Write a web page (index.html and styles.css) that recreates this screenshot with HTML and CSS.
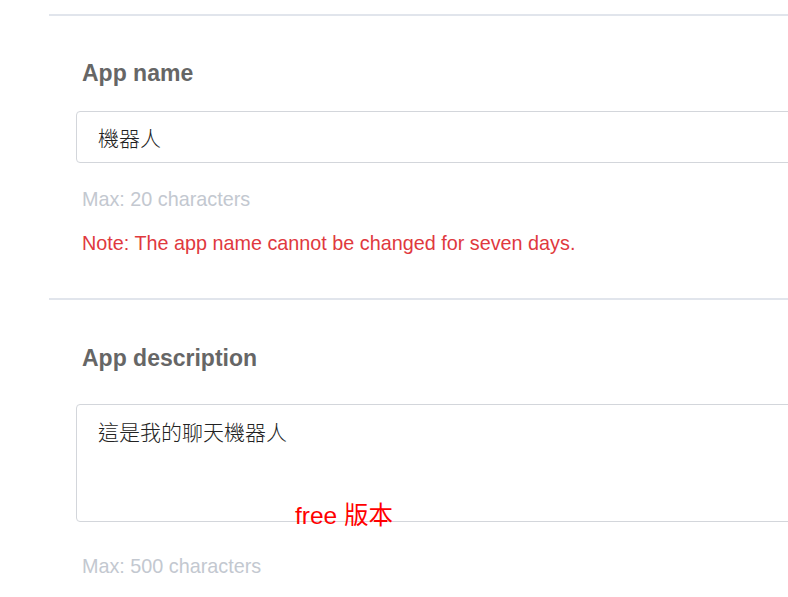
FILE: index.html
```html
<!DOCTYPE html>
<html lang="zh-Hant">
<head>
<meta charset="utf-8">
<title>App settings</title>
<link rel="stylesheet" href="styles.css">
</head>
<body>
<div class="page">
  <section class="field field-name">
    <h2 class="label">App name</h2>
    <div class="input">機器人</div>
    <p class="hint">Max: 20 characters</p>
    <p class="note">Note: The app name cannot be changed for seven days.</p>
  </section>
  <section class="field field-desc">
    <h2 class="label">App description</h2>
    <div class="textarea">這是我的聊天機器人</div>
    <p class="hint">Max: 500 characters</p>
    <span class="badge">free 版本</span>
  </section>
</div>
</body>
</html>
```
FILE: styles.css
```css
html, body {
  margin: 0;
  padding: 0;
  background: #ffffff;
  overflow: hidden;
}
body {
  font-family: "Liberation Sans", Arial, "Noto Sans CJK TC", sans-serif;
}
.page {
  padding-top: 14px;
  margin-left: 49px;
  width: 900px;
  position: relative;
}
.field {
  border-top: 2px solid #e1e5ec;
  padding: 0 0 0 27px;
  display: flex;
  flex-direction: column;
  align-items: stretch;
}
.label {
  margin: 0;
  padding-left: 6px;
  font-size: 23px;
  line-height: 30px;
  font-weight: bold;
  color: #666666;
}
.field-name .label { margin-top: 42px; }
.field-desc .label { margin-top: 43px; }
.input, .textarea {
  border: 1px solid #d3d6db;
  border-radius: 4px;
  box-sizing: border-box;
  padding: 0 21px;
  font-family: "Noto Sans CJK TC", "Liberation Sans", sans-serif;
  font-weight: 300;
  font-size: 21px;
  color: #222222;
}
.input {
  margin-top: 23px;
  height: 52px;
  line-height: 50px;
}
.textarea {
  margin-top: 31px;
  height: 118px;
  padding-top: 12px;
  line-height: 28px;
}
.hint {
  margin: 0;
  padding-left: 6px;
  font-size: 19.8px;
  line-height: 24px;
  color: #c3c8d0;
}
.field-name .hint { margin-top: 24px; }
.field-desc .hint { margin-top: 32px; }
.note {
  margin: 20px 0 43px;
  padding-left: 6px;
  font-size: 19.8px;
  line-height: 24px;
  color: #e0393e;
}
.field-desc { position: relative; }
.badge {
  position: absolute;
  left: 246px;
  top: 202px;
  font-size: 24.5px;
  line-height: 28px;
  color: #ff0000;
  font-family: "Liberation Sans", Arial, "Noto Sans CJK TC", sans-serif;
}
```
